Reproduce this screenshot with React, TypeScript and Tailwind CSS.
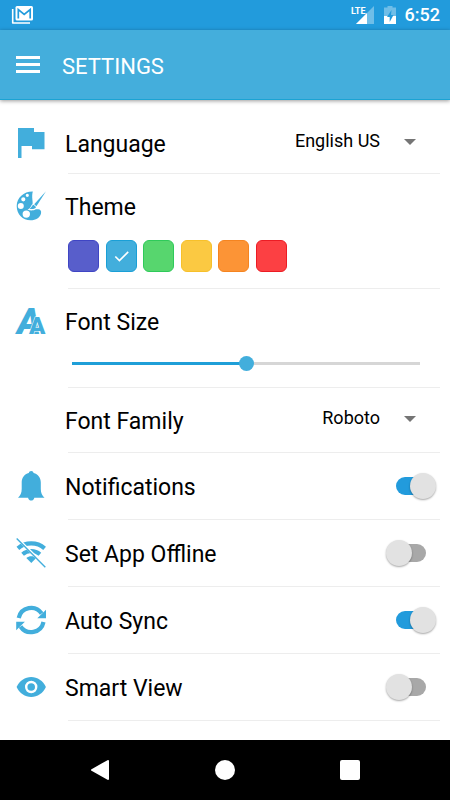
import React, { useState } from 'react';

type IconProps = { className?: string };

const FlagIcon: React.FC<IconProps> = ({ className }) => (
  <svg viewBox="0 0 30 30" className={className} fill="currentColor" aria-hidden="true">
    <path d="M2 0H18V4H28.5V21.3H16V18H5.5V30H2Z" />
  </svg>
);

const PaletteIcon: React.FC<IconProps> = ({ className }) => (
  <svg viewBox="0 0 30 30" className={className} fill="currentColor" aria-hidden="true">
    <path
      fillRule="evenodd"
      d="M16.800.4C8 .2.700 6.500.700 15c0 8.300 6 14.300 13.800 14.300 5.500 0 9.500-2.800 10.500-6.800.7-2.700-.8-4.300-2.800-4.300-1.200 0-1.700.2-2.400 0-2 1.400-5.500 1.700-8.300.2 3.500-.9 3-3.700 5-5.200C17.300 11 15.300 6 16.800.4ZM11.300 2.700a1.600 1.600 0 1 0 0 3.200 1.600 1.600 0 0 0 0-3.200ZM7.300 6.200a2.100 2.100 0 1 0 0 4.200 2.100 2.100 0 0 0 0-4.200ZM4.800 12a3 3 0 1 0 0 6 3 3 0 0 0 0-6ZM10.300 19.400a3.700 3.700 0 1 0 0 7.400 3.700 3.700 0 0 0 0-7.400Z"
    />
    <path d="M30 .2 20.400 15.300 18.200 13.300Z" />
    <path d="M17.600 13.800 20 16C19.400 18 16 18.600 13.600 17.700 15.700 16.800 15.400 14.500 17.600 13.800Z" />
  </svg>
);

const FontSizeIcon: React.FC<IconProps> = ({ className }) => (
  <svg viewBox="0 0 30 30" className={className} fill="currentColor" overflow="visible" aria-hidden="true">
    <text x="1" y="28" fontSize="36" fontWeight="900" fontStyle="italic" fontFamily="Roboto, sans-serif">A</text>
    <text
      x="13"
      y="28"
      fontSize="24"
      fontWeight="900"
      fontFamily="Roboto, sans-serif"
      stroke="#fff"
      strokeWidth="1"
      paintOrder="stroke"
    >
      A
    </text>
  </svg>
);

const BellIcon: React.FC<IconProps> = ({ className }) => (
  <svg viewBox="0 0 30 30" className={className} fill="currentColor" aria-hidden="true">
    <path d="M15.200 0c1.300 0 2.200.8 2.400 1.900 4.500 1.200 7.200 4.800 7.200 9.600v6.500c0 4 1.300 6.500 3.700 8.700H18.300c-.3 1.700-1.500 2.900-3.100 2.900s-2.800-1.200-3.100-2.900H2c2.400-2.200 3.700-4.700 3.700-8.700v-6.500c0-4.800 2.600-8.400 7.100-9.600C13 .8 13.900 0 15.200 0Z" />
  </svg>
);

const WifiOffIcon: React.FC<IconProps> = ({ className }) => (
  <svg viewBox="0 0 30 30" className={className} fill="none" stroke="currentColor" aria-hidden="true">
    <path strokeWidth="4.200" d="M1.900 10.300C9.500 3.800 21 3.800 28.600 10.300" />
    <path strokeWidth="4" d="M6.600 16.300C11.500 12 19 12 23.900 16.300" />
    <path fill="currentColor" stroke="none" d="M10.300 20C13.200 17.700 17.400 17.700 20.200 20L15.300 25Z" />
    <path stroke="#fff" strokeWidth="2.600" d="M1.500.5 30 28.800" />
    <path strokeWidth="1.400" d="M.7.5 29.300 29.300" />
  </svg>
);

const SyncIcon: React.FC<IconProps> = ({ className }) => (
  <svg viewBox="0 0 30 30" className={className} aria-hidden="true">
    <g fill="none" stroke="currentColor" strokeWidth="4.200">
      <path d="M2.700 13A12.700 12.700 0 0 1 25.700 8.500" />
      <path d="M27.500 17A12.700 12.700 0 0 1 4.500 21.500" />
    </g>
    <path fill="currentColor" d="M30 4.800V13.200H21.300ZM.2 25.200V16.800H8.900Z" />
  </svg>
);

const EyeIcon: React.FC<IconProps> = ({ className }) => (
  <svg viewBox="0 0 30 30" className={className} fill="currentColor" aria-hidden="true">
    <path d="M.6 15C3.500 8.700 9 5 15.200 5S27 8.700 29.900 15C27 21.300 21.400 25 15.200 25S3.500 21.300.6 15Z" />
    <circle cx="15.200" cy="15" r="5" fill="none" stroke="#fff" strokeWidth="2.400" />
  </svg>
);

const ICON = 'h-[30px] w-[30px] text-[#42aedc]';

const Divider: React.FC = () => <hr className="ml-[68px] mr-2.5 border-t border-[#ededed]" />;

type HeadingProps = {
  icon?: React.ReactNode;
  label: string;
  htmlFor?: string;
  children?: React.ReactNode;
};

const Heading: React.FC<HeadingProps> = ({ icon, label, htmlFor, children }) => (
  <div className="flex w-full items-center">
    <span className="mr-[19px] w-[30px] shrink-0">{icon}</span>
    {htmlFor ? (
      <label htmlFor={htmlFor} className="flex-1 pt-1">{label}</label>
    ) : (
      <h2 className="flex-1 pt-1">{label}</h2>
    )}
    {children}
  </div>
);

type DropdownProps = { id: string; value: string; options: string[]; onChange: (value: string) => void };

const Dropdown: React.FC<DropdownProps> = ({ id, value, options, onChange }) => (
  <span className="relative mr-[18px] flex items-center pb-1">
    <select
      id={id}
      value={value}
      onChange={(e) => onChange(e.target.value)}
      className="field-sizing-content appearance-none bg-transparent pr-9 text-lg leading-6 outline-none"
    >
      {options.map((option) => (
        <option key={option}>{option}</option>
      ))}
    </select>
    <svg viewBox="0 0 12 6" className="pointer-events-none absolute right-0 mt-0.5 h-1.5 w-3 fill-[#757575]" aria-hidden="true">
      <path d="M0 0H12L6 6Z" />
    </svg>
  </span>
);

type ToggleProps = { id: string; checked: boolean; onChange: () => void };

const Toggle: React.FC<ToggleProps> = ({ id, checked, onChange }) => (
  <input
    id={id}
    type="checkbox"
    role="switch"
    checked={checked}
    onChange={onChange}
    className="relative mr-[-2px] h-[26px] w-[50px] shrink-0 cursor-pointer appearance-none before:absolute before:inset-x-2.5 before:top-1 before:h-[18px] before:rounded-full before:bg-[#a8a8a8] after:absolute after:left-0 after:top-0 after:h-[26px] after:w-[26px] after:rounded-full after:bg-[#e2e2e2] after:shadow-[0_1px_2px_rgba(0,0,0,0.35)] checked:before:bg-[#229bdc] checked:after:left-6"
  />
);

const THEMES = [
  { name: 'Indigo', swatch: 'border-[#3f45c4] bg-[#585ecb]' },
  { name: 'Blue', swatch: 'border-[#1a9fd6] bg-[#42aedc]' },
  { name: 'Green', swatch: 'border-[#2fca5a] bg-[#57d66e]' },
  { name: 'Yellow', swatch: 'border-[#f7c02a] bg-[#fbc942]' },
  { name: 'Orange', swatch: 'border-[#f58420] bg-[#fc9436]' },
  { name: 'Red', swatch: 'border-[#ec1c24] bg-[#fc4043]' },
];

const StatusBar: React.FC = () => (
  <div className="flex h-[30px] items-center bg-[#229bdc] px-2.5 text-white">
    <svg viewBox="0 0 24 20" className="h-5 w-6" fill="none" aria-label="New mail">
      <path d="M2.700 4V18H20" stroke="currentColor" strokeWidth="1.600" strokeLinejoin="round" />
      <rect x="5.500" y="1" width="17.500" height="14.500" rx="1.500" fill="currentColor" />
      <path d="M8.300 13.500V4.500L14.200 9.300 20.200 4.500V13.500" stroke="#229bdc" strokeWidth="1.700" />
    </svg>
    <svg viewBox="0 0 24 20" className="ml-auto h-5 w-6" fill="currentColor" overflow="visible" aria-label="LTE signal">
      <path d="M23 1V19H5Z" opacity="0.350" />
      <path d="M16 8V19H5Z" />
      <text x="0" y="9" fontSize="9" fontWeight="700" fontFamily="Roboto, sans-serif">LTE</text>
    </svg>
    <svg viewBox="0 0 14 20" className="ml-2 h-5 w-3.5" fill="currentColor" aria-label="Battery charging">
      <path d="M4.500 1H9.500V2.500H13V19H1V2.500H4.500Z" opacity="0.350" />
      <path d="M1 11H13V19H1Z" />
      <path d="M8.500 5 4 12H6.700V17L10.500 10H8Z" fill="#229bdc" />
    </svg>
    <time className="ml-2 text-lg font-medium leading-6">6:52</time>
  </div>
);

const App: React.FC = () => {
  const [language, setLanguage] = useState('English US');
  const [theme, setTheme] = useState('Blue');
  const [fontSize, setFontSize] = useState(50);
  const [fontFamily, setFontFamily] = useState('Roboto');
  const [switches, setSwitches] = useState({ notifications: true, offline: false, sync: true, smartView: false });

  const toggle = (key: keyof typeof switches) => setSwitches((prev) => ({ ...prev, [key]: !prev[key] }));

  const toggleRows: { key: keyof typeof switches; label: string; icon: React.ReactNode }[] = [
    { key: 'notifications', label: 'Notifications', icon: <BellIcon className={ICON} /> },
    { key: 'offline', label: 'Set App Offline', icon: <WifiOffIcon className={ICON} /> },
    { key: 'sync', label: 'Auto Sync', icon: <SyncIcon className={ICON} /> },
    { key: 'smartView', label: 'Smart View', icon: <EyeIcon className={ICON} /> },
  ];

  return (
    <div className="flex min-h-screen flex-col bg-white font-[Roboto,sans-serif] text-[23px] leading-8 text-black">
      <StatusBar />

      {/* App bar */}
      <header className="relative flex h-[70px] items-center border-b border-[#1ba3d3] bg-[#44aedc] px-4 text-white shadow-[0_1px_4px_rgba(0,0,0,0.4)]">
        <button type="button" aria-label="Open menu" className="flex w-6 flex-col gap-1">
          <span className="h-[3px] bg-white" />
          <span className="h-[3px] bg-white" />
          <span className="h-[3px] bg-white" />
        </button>
        <h1 className="ml-[22px] pt-1 text-[22px]">SETTINGS</h1>
      </header>

      <main className="flex-1 pt-3">
        <section className="flex h-[61px] items-center px-4">
          <Heading icon={<FlagIcon className={ICON} />} label="Language" htmlFor="language">
            <Dropdown id="language" value={language} options={['English US', 'English UK', 'Français']} onChange={setLanguage} />
          </Heading>
        </section>
        <Divider />

        <section className="px-4 pb-4 pt-3.5">
          <Heading icon={<PaletteIcon className={ICON} />} label="Theme" />
          <div role="radiogroup" aria-label="Theme" className="ml-[52px] mt-4 flex w-[219px] justify-between">
            {THEMES.map(({ name, swatch }) => (
              <span key={name} className="relative flex">
                <input
                  type="radio"
                  name="theme"
                  aria-label={name}
                  checked={theme === name}
                  onChange={() => setTheme(name)}
                  className={`h-8 w-[31px] cursor-pointer appearance-none rounded-md border ${swatch}`}
                />
                {theme === name && (
                  <svg viewBox="0 0 30 32" className="pointer-events-none absolute inset-0" fill="none" stroke="#fff" strokeWidth="1.600" aria-hidden="true">
                    <path d="M9 16 13 20 21.500 11.500" />
                  </svg>
                )}
              </span>
            ))}
          </div>
        </section>
        <Divider />

        <section className="px-4 pb-[22px] pt-3.5">
          <Heading icon={<FontSizeIcon className={ICON} />} label="Font Size" htmlFor="font-size" />
          <div className="ml-14 mr-3.5 mt-[23px] flex">
            <input
              id="font-size"
              type="range"
              min={0}
              max={100}
              value={fontSize}
              onChange={(e) => setFontSize(Number(e.target.value))}
              style={{ backgroundImage: `linear-gradient(to right, #1f9fd8 ${fontSize}%, #d6d6d6 ${fontSize}%)` }}
              className="h-[3px] w-full cursor-pointer appearance-none [&::-webkit-slider-thumb]:h-[15px] [&::-webkit-slider-thumb]:w-[15px] [&::-webkit-slider-thumb]:appearance-none [&::-webkit-slider-thumb]:rounded-full [&::-webkit-slider-thumb]:bg-[#42aedc]"
            />
          </div>
        </section>
        <Divider />

        <section className="flex h-16 items-center px-4">
          <Heading label="Font Family" htmlFor="font-family">
            <Dropdown id="font-family" value={fontFamily} options={['Roboto', 'Lato', 'Open Sans']} onChange={setFontFamily} />
          </Heading>
        </section>
        <Divider />

        {toggleRows.map(({ key, label, icon }) => (
          <React.Fragment key={key}>
            <section className="flex h-[66px] items-center px-4">
              <Heading icon={icon} label={label} htmlFor={key}>
                <Toggle id={key} checked={switches[key]} onChange={() => toggle(key)} />
              </Heading>
            </section>
            <Divider />
          </React.Fragment>
        ))}
      </main>

      {/* System navigation */}
      <nav className="flex h-[60px] items-center bg-black px-[37px] text-white">
        <button type="button" aria-label="Back" className="flex flex-1 justify-center">
          <svg viewBox="0 0 20 20" className="h-5 w-5" fill="currentColor" stroke="currentColor" strokeWidth="2" strokeLinejoin="round">
            <path d="M18 1V19L2 10Z" />
          </svg>
        </button>
        <button type="button" aria-label="Home" className="flex flex-1 justify-center">
          <span className="h-5 w-5 rounded-full bg-white" />
        </button>
        <button type="button" aria-label="Recent apps" className="flex flex-1 justify-center">
          <span className="h-5 w-5 rounded-xs bg-white" />
        </button>
      </nav>
    </div>
  );
};

export default App;
